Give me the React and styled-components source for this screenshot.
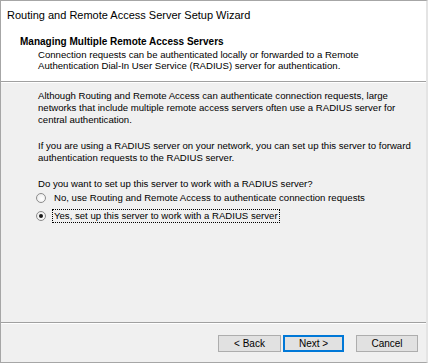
import React from "react";
import styled, { createGlobalStyle } from "styled-components";

const Global = createGlobalStyle`
  html, body { margin: 0; padding: 0; background: #f0f0f0; }
  body { font-family: "Liberation Sans", Arial, sans-serif; }
`;

const Window = styled.div`
  width: 428px;
  height: 363px;
  box-sizing: border-box;
  border-top: 1px solid #a6a6a6;
  border-left: 1px solid #a6a6a6;
  border-right: 2px solid #e4e4e4;
  border-bottom: 1px solid #a6a6a6;
  background: #f0f0f0;
  display: flex;
  flex-direction: column;
  font-size: 9.6px;
  color: #000;
  white-space: nowrap;
`;

const TitleBar = styled.div`
  background: #fff;
  height: 28px;
  padding-left: 6px;
  display: flex;
  align-items: center;
  font-size: 11px;
`;

const Header = styled.div`
  background: #fff;
  padding: 7px 0 10px 19px;
  border-bottom: 1px solid #a0a0a0;
`;

const Heading = styled.div`
  font-weight: bold;
  font-size: 10px;
  line-height: 12px;
  margin-bottom: 1px;
`;

const Desc = styled.div`
  padding-left: 18px;
  line-height: 11px;
`;

const Body = styled.div`
  flex: 1;
  padding: 7px 0 0 37px;
  border-top: 1px solid #fff;
`;

const Para = styled.p`
  margin: 0 0 14px 0;
  line-height: 12px;
  &:last-of-type {
    margin-bottom: 0;
  }
`;

const RadioList = styled.div`
  display: flex;
  flex-direction: column;
  gap: 4px;
  margin: 1px 0 0 -2px;
`;

const RadioRow = styled.label`
  display: flex;
  align-items: center;
  gap: 6px;
  height: 14px;
`;

const RadioCircle = styled.span`
  width: 10px;
  height: 10px;
  box-sizing: border-box;
  border-radius: 50%;
  border: 1px solid #8c8c8c;
  background: radial-gradient(circle at 60% 60%, #ffffff 0%, #e6e6e6 100%);
  display: flex;
  align-items: center;
  justify-content: center;
  &::after {
    content: "";
    width: 4px;
    height: 4px;
    border-radius: 50%;
    background: ${(p) => (p.$checked ? "#1a1a1a" : "transparent")};
  }
`;

const RadioText = styled.span`
  line-height: 12px;
  padding: 0 1px;
  border: 1px ${(p) => (p.$focused ? "dotted #000" : "solid transparent")};
`;

const Footer = styled.div`
  border-top: 1px solid #a0a0a0;
  box-shadow: inset 0 1px 0 #fff;
  height: 40px;
  display: flex;
  justify-content: flex-end;
  align-items: flex-start;
  padding: 12px 8px 0 0;
  box-sizing: border-box;
`;

const Button = styled.button`
  width: ${(p) => p.$w}px;
  height: 17px;
  box-sizing: border-box;
  font-family: inherit;
  font-size: 10px;
  color: #000;
  background: #e1e1e1;
  border: 1px solid ${(p) => (p.$default ? "#0078d7" : "#adadad")};
  box-shadow: ${(p) => (p.$default ? "inset 0 0 0 1px #0078d7" : "none")};
  margin-left: ${(p) => p.$gap || 0}px;
  padding: 0;
  line-height: 15px;
`;

export default function App() {
  return (
    <>
      <Global />
      <Window>
        <TitleBar>Routing and Remote Access Server Setup Wizard</TitleBar>
        <Header>
          <Heading>Managing Multiple Remote Access Servers</Heading>
          <Desc>
            Connection requests can be authenticated locally or forwarded to a Remote
            <br />
            Authentication Dial-In User Service (RADIUS) server for authentication.
          </Desc>
        </Header>
        <Body>
          <Para>
            Although Routing and Remote Access can authenticate connection requests, large
            <br />
            networks that include multiple remote access servers often use a RADIUS server for
            <br />
            central authentication.
          </Para>
          <Para>
            If you are using a RADIUS server on your network, you can set up this server to forward
            <br />
            authentication requests to the RADIUS server.
          </Para>
          <Para>Do you want to set up this server to work with a RADIUS server?</Para>
          <RadioList>
            <RadioRow>
              <RadioCircle />
              <RadioText>No, use Routing and Remote Access to authenticate connection requests</RadioText>
            </RadioRow>
            <RadioRow>
              <RadioCircle $checked />
              <RadioText $focused>Yes, set up this server to work with a RADIUS server</RadioText>
            </RadioRow>
          </RadioList>
        </Body>
        <Footer>
          <Button $w={63}>&lt; Back</Button>
          <Button $w={61} $default $gap={2}>Next &gt;</Button>
          <Button $w={62} $gap={12}>Cancel</Button>
        </Footer>
      </Window>
    </>
  );
}
